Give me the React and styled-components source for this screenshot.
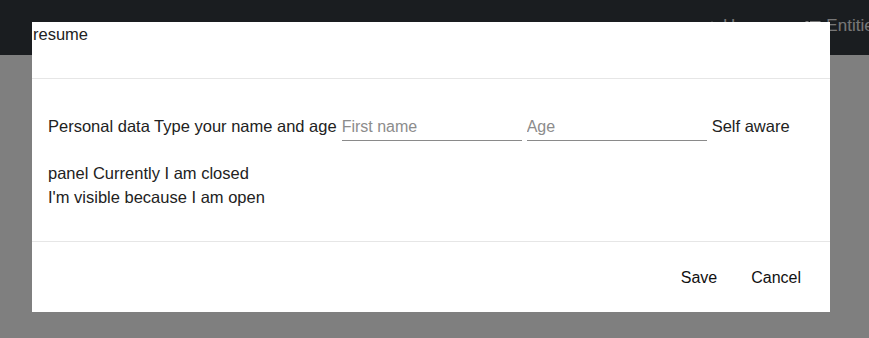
import React from "react";
import styled, { createGlobalStyle } from "styled-components";

const GlobalStyle = createGlobalStyle`
  html, body {
    margin: 0;
    padding: 0;
    background: #ffffff;
    font-family: "Liberation Sans", Arial, sans-serif;
  }
`;

const Page = styled.div`
  width: 869px;
  height: 338px;
  position: relative;
  overflow: hidden;
`;

const NavBar = styled.nav`
  height: 55px;
  background: #343a40;
  display: flex;
  align-items: flex-start;
  gap: 37px;
  padding: 15px 0 0 706px;
  box-sizing: border-box;
  white-space: nowrap;
`;

const NavLink = styled.a`
  display: flex;
  align-items: center;
  gap: 5px;
  color: #eeeeee;
  font-size: 17px;
  line-height: 22px;
  text-decoration: none;
`;

const Overlay = styled.div`
  position: absolute;
  inset: 0;
  background: rgba(0, 0, 0, 0.5);
`;

const Dialog = styled.div`
  position: absolute;
  left: 32px;
  top: 22px;
  width: 798px;
  height: 290px;
  background: #fff;
  display: flex;
  flex-direction: column;
  color: #222;
`;

const Header = styled.div`
  height: 57px;
  padding: 3px 1px 0;
  box-sizing: border-box;
  border-bottom: 1px solid #e6e6e6;
  font-size: 16.5px;
  line-height: 19px;
`;

const Body = styled.div`
  flex: 1;
  padding: 35px 16px 0;
  display: flex;
  flex-direction: column;
  font-size: 16.5px;
  border-bottom: 1px solid #e6e6e6;
`;

const FieldRow = styled.div`
  display: flex;
  align-items: flex-start;
  gap: 5px;
  line-height: 24px;
  margin-bottom: 20px;
`;

const Input = styled.input`
  width: 180px;
  border: none;
  border-bottom: 1px solid #8a8a8a;
  font: inherit;
  font-size: 16px;
  color: #222;
  padding: 0;
  height: 27px;
  line-height: 24px;
  outline: none;
  box-sizing: border-box;
  &::placeholder {
    color: #8c8c8c;
  }
`;

const Line = styled.div`
  line-height: 24px;
`;

const Footer = styled.div`
  height: 70px;
  display: flex;
  justify-content: flex-end;
  align-items: center;
  padding: 2px 12px 0 0;
  box-sizing: border-box;
`;

const Button = styled.button`
  background: none;
  border: none;
  font: inherit;
  font-size: 16px;
  color: #111;
  padding: 6px 17px;
  cursor: pointer;
`;

const HomeIcon = () => (
  <svg width="12" height="12" viewBox="0 0 14 13" fill="currentColor">
    <path d="M7 1 L1 6.5 H3 V12 H6 V8.5 H8 V12 H11 V6.5 H13 Z" />
  </svg>
);

const ListIcon = () => (
  <svg width="16" height="13" viewBox="0 0 15 13" fill="currentColor">
    <rect x="0" y="1" width="3" height="2.5" />
    <rect x="4.5" y="1" width="10.5" height="2.5" />
    <rect x="0" y="5.2" width="3" height="2.5" />
    <rect x="4.5" y="5.2" width="10.5" height="2.5" />
    <rect x="0" y="9.4" width="3" height="2.5" />
    <rect x="4.5" y="9.4" width="10.5" height="2.5" />
  </svg>
);

const App = () => {
  return (
    <Page>
      <GlobalStyle />
      <NavBar>
        <NavLink>
          <HomeIcon />
          Home
        </NavLink>
        <NavLink>
          <ListIcon />
          Entities
        </NavLink>
      </NavBar>
      <Overlay />
      <Dialog>
        <Header>resume</Header>
        <Body>
          <FieldRow>
            <span>Personal data Type your name and age</span>
            <Input placeholder="First name" />
            <Input placeholder="Age" />
            <span>Self aware</span>
          </FieldRow>
          <Line>panel Currently I am closed</Line>
          <Line>I'm visible because I am open</Line>
        </Body>
        <Footer>
          <Button>Save</Button>
          <Button>Cancel</Button>
        </Footer>
      </Dialog>
    </Page>
  );
};

export default App;
